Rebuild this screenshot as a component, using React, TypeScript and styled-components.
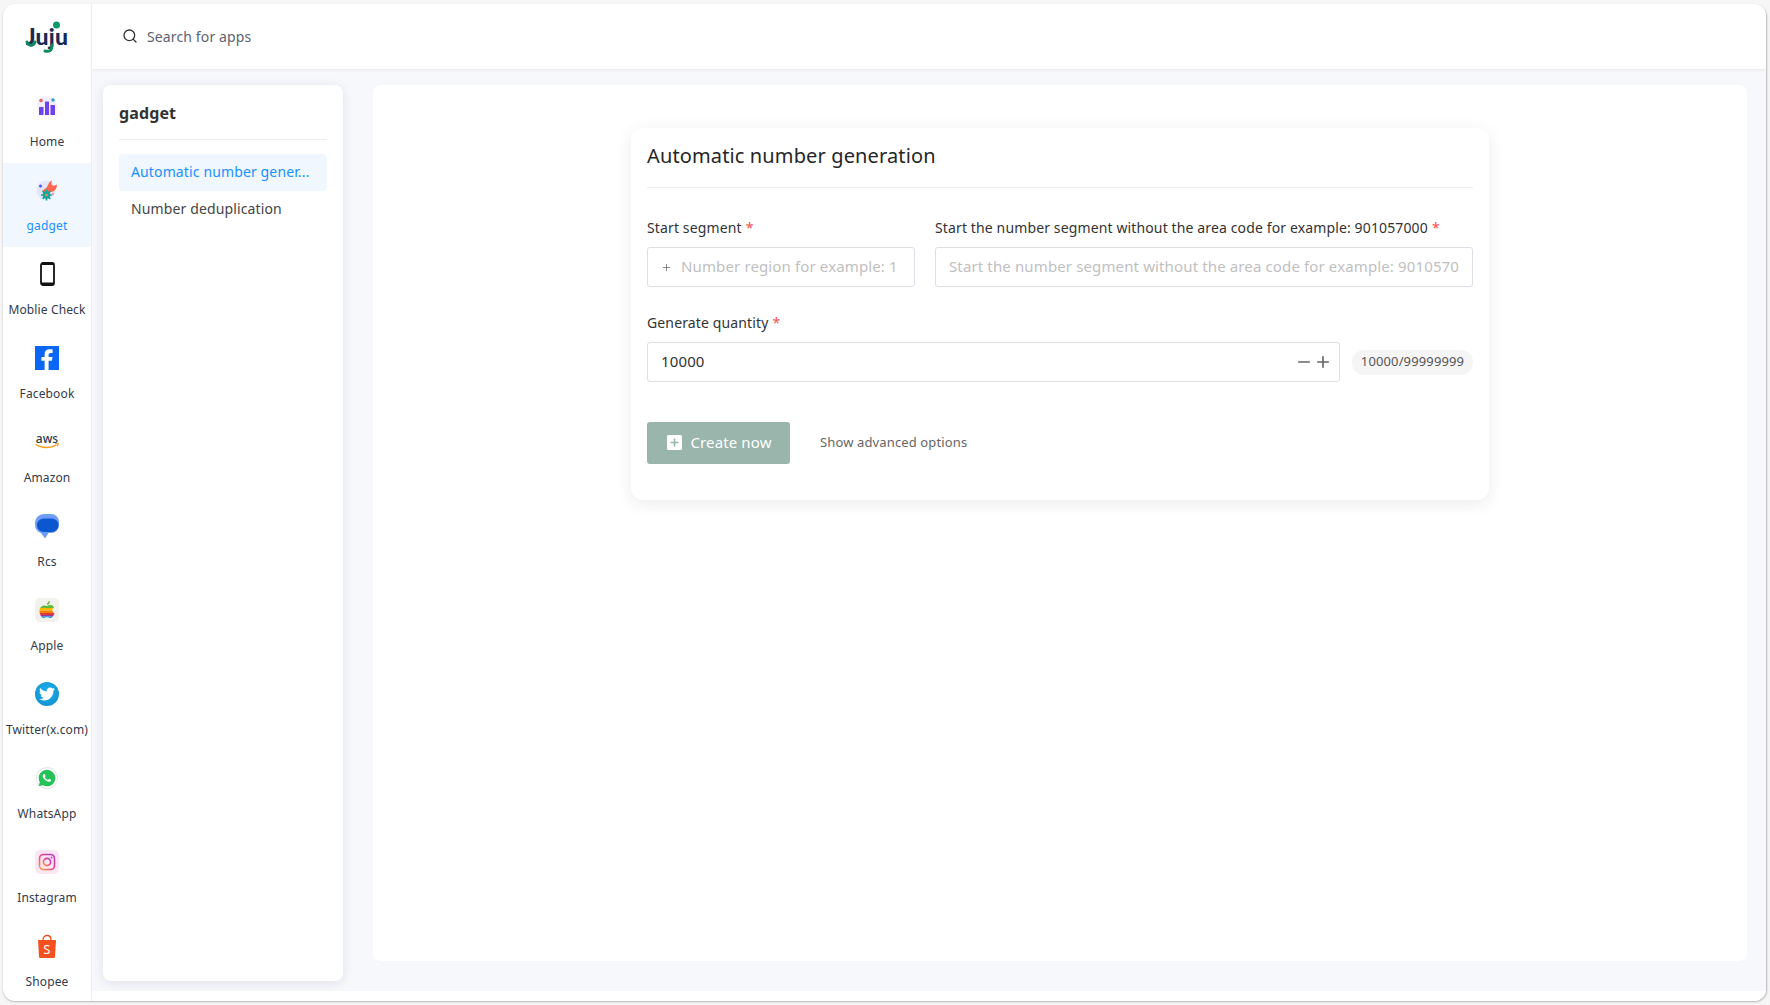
import React from 'react';
import styled, { createGlobalStyle } from 'styled-components';
import { Search, Minus, Plus } from 'lucide-react';
import { FaTwitter } from 'react-icons/fa';
import { RiWhatsappFill } from 'react-icons/ri';

const FONT = `"Noto Sans", "Open Sans", Arial, sans-serif`;
const TRACKING = '0.13px';

const Global = createGlobalStyle`
  html, body { margin: 0; padding: 0; height: 100%; }
  body { background: #f6f6f6; font-family: ${FONT}; letter-spacing: ${TRACKING}; overflow: hidden; }
  * { box-sizing: border-box; }
`;

const Page = styled.div`
  width: 1770px;
  height: 1005px;
  padding: 4px 4px 4px 3px;
`;
const Window = styled.div`
  display: flex;
  height: 997px;
  background: #fff;
  border-radius: 12px;
  overflow: hidden;
  box-shadow: 0.5px 1px 2px rgba(0, 0, 0, 0.25);
`;
const Sidebar = styled.nav`
  flex: 0 0 89px;
  border-right: 1px solid #eceef2;
  overflow: hidden;
  position: relative;
  z-index: 2;
`;
const LogoBox = styled.div`
  height: 75px;
  padding-top: 17px;
  display: flex;
  justify-content: center;
`;
const NavItem = styled.div<{ $active?: boolean }>`
  height: 84px;
  padding-top: 15px;
  display: flex;
  flex-direction: column;
  align-items: center;
  background: ${p => (p.$active ? '#f0f7ff' : 'transparent')};
  color: ${p => (p.$active ? '#1890ff' : '#333b4a')};
  font-size: 12px;
  white-space: nowrap;
`;
const NavIcon = styled.div`
  width: 24px;
  height: 24px;
  margin-bottom: 16px;
  display: flex;
  align-items: center;
  justify-content: center;
`;
const NavLabel = styled.span`
  line-height: 16px;
`;
const Right = styled.div`
  flex: 1;
  display: flex;
  flex-direction: column;
  min-width: 0;
`;
const Header = styled.header`
  flex: 0 0 65px;
  display: flex;
  align-items: center;
  gap: 9px;
  padding-left: 30px;
  background: #fff;
  box-shadow: 0 1px 3px rgba(0, 0, 0, 0.07);
  color: #5c6370;
  font-size: 14px;
  position: relative;
`;
const SearchGlyph = styled(Search)`
  color: #333;
  transform: translateY(-1px);
`;
const Main = styled.main`
  flex: 1;
  display: flex;
  gap: 30px;
  padding: 16px 19px 10px 11px;
  background: #f7f8fc;
`;
const Footer = styled.div`
  flex: 0 0 10px;
  background: #fff;
`;
const SidePanel = styled.aside`
  flex: 0 0 240px;
  background: #fff;
  border-radius: 8px;
  padding: 0 16px;
  box-shadow: 0 2px 12px rgba(30, 30, 60, 0.1);
`;
const PanelTitle = styled.h2`
  margin: 0 0 14px;
  height: 55px;
  line-height: 56px;
  font-size: 16px;
  font-weight: 700;
  color: #333;
  border-bottom: 1px solid #eee;
`;
const PanelItem = styled.div<{ $active?: boolean }>`
  height: 37px;
  line-height: 36px;
  padding: 0 12px;
  border-radius: 4px;
  font-size: 14px;
  color: ${p => (p.$active ? '#1890ff' : '#444')};
  background: ${p => (p.$active ? '#f0f7ff' : 'transparent')};
  white-space: nowrap;
`;
const Stage = styled.section`
  flex: 1;
  margin-bottom: 20px;
  background: #fff;
  border-radius: 8px;
  padding-top: 43px;
  display: flex;
  justify-content: center;
  align-items: flex-start;
`;
const Card = styled.div`
  width: 858px;
  height: 372px;
  padding: 0 16px;
  background: #fff;
  border-radius: 12px;
  box-shadow: 0 4px 18px rgba(0, 0, 0, 0.08);
`;
const CardTitle = styled.h1`
  margin: 0 0 24px;
  height: 60px;
  line-height: 56px;
  font-size: 20px;
  font-weight: 400;
  color: #262626;
  border-bottom: 1px solid #eee;
`;
const SegmentRow = styled.div`
  display: grid;
  grid-template-columns: 268px 1fr;
  column-gap: 20px;
  margin-bottom: 20px;
`;
const Field = styled.div`
  min-width: 0;
`;
const Label = styled.div`
  height: 35px;
  line-height: 32px;
  font-size: 14px;
  color: #333;
  white-space: nowrap;
`;
const Star = styled.span`
  color: #ff4d4f;
  margin-left: 4px;
`;
const InputBox = styled.div`
  height: 40px;
  display: flex;
  align-items: center;
  padding: 0 13px;
  border: 1px solid #dcdfe6;
  border-radius: 3px;
  background: #fff;
`;
const Prefix = styled.span`
  color: #666;
  margin-right: 9px;
  display: flex;
`;
const TextInput = styled.input`
  flex: 1;
  min-width: 0;
  border: 0;
  outline: 0;
  padding: 0 0 3px;
  font: 400 15px ${FONT};
  letter-spacing: ${TRACKING};
  color: #333;
  background: transparent;
  &::placeholder {
    color: #bfbfbf;
    opacity: 1;
  }
`;
const QuantityRow = styled.div`
  display: flex;
  align-items: center;
  gap: 12px;
`;
const QuantityBox = styled(InputBox)`
  flex: 1;
  padding-right: 7px;
`;
const Stepper = styled.div`
  display: flex;
  gap: 1px;
  color: #666;
`;
const Counter = styled.span`
  flex: 0 0 121px;
  height: 25px;
  line-height: 23px;
  text-align: center;
  border-radius: 12px;
  background: #f5f5f5;
  font-size: 13px;
  color: #555;
`;
const Actions = styled.div`
  display: flex;
  align-items: center;
  gap: 30px;
  margin-top: 40px;
`;
const CreateButton = styled.button`
  width: 143px;
  height: 42px;
  padding: 0 0 2px 2px;
  display: flex;
  align-items: center;
  justify-content: center;
  gap: 8px;
  border: 0;
  border-radius: 3px;
  background: #99b5ac;
  color: #fff;
  font: 400 15px ${FONT};
  letter-spacing: ${TRACKING};
`;
const AdvancedLink = styled.span`
  padding-bottom: 2px;
  font-size: 13px;
  color: #666;
`;
const TwitterDisc = styled.div`
  width: 24px;
  height: 24px;
  border-radius: 50%;
  background: radial-gradient(circle at 50% 40%, #1fb2ee, #0e8ac9);
  display: flex;
  align-items: center;
  justify-content: center;
`;
const WhatsappDisc = styled.div`
  width: 20px;
  height: 20px;
  border-radius: 50%;
  background: #fff;
  box-shadow: 0 0 0 1px #e6e8e6;
  display: flex;
  align-items: center;
  justify-content: center;
`;

const Logo = () => (
  <svg width="44" height="33" viewBox="0 0 44 33" role="img" aria-label="Juju logo">
    <text x="22" y="24" textAnchor="middle" fontFamily="Lato, sans-serif" fontWeight="900" fontSize="23" letterSpacing="0.2" fill="#1b2a55">Juju</text>
    <path d="M2 21c1 4 6 5 8 0" fill="none" stroke="#0d8a5f" strokeWidth="3" strokeLinecap="round" />
    <path d="M20 30c4 1 7 0 7-6" fill="none" stroke="#0d8a5f" strokeWidth="3" strokeLinecap="round" />
    <circle cx="31.500" cy="4" r="3.500" fill="#0d9a66" />
  </svg>
);
const HomeIcon = () => (
  <svg width="20" height="20" viewBox="0 0 20 20">
    <circle cx="10" cy="10" r="10" fill="#f3eeff" />
    <rect x="2" y="11" width="4.500" height="8" rx="0.500" fill="#6f42ee" />
    <rect x="8" y="5.500" width="4" height="13.500" rx="0.500" fill="#6f42ee" />
    <rect x="13.500" y="9" width="4.500" height="10" rx="0.500" fill="#6f42ee" />
    <circle cx="4" cy="4.500" r="1.800" fill="#f0605e" />
    <circle cx="16" cy="4" r="1.800" fill="#2ea8c4" />
  </svg>
);
const GadgetIcon = () => (
  <svg width="22" height="22" viewBox="0 0 22 22">
    <circle cx="10" cy="11" r="9.500" fill="#e3e6fa" />
    <path d="M6 12C8 10 11 9 12 6 13 3 15 1.500 16 1.500L15 5l2.500 2L21 5.500C21 9 19 13 15 13L9 15z" fill="#fb6a50" />
    <circle cx="10.500" cy="16" r="3.800" fill="#13a89a" />
    <path d="M10.500 10.500v11M5 16h11M6.700 12.200l7.600 7.600M14.300 12.200l-7.600 7.600" stroke="#13a89a" strokeWidth="1.700" />
    <circle cx="10.500" cy="16" r="1.300" fill="#f9847a" />
    <circle cx="4.500" cy="7" r="1.500" fill="#4b53e8" />
    <circle cx="17" cy="15" r="1" fill="#f9847a" />
  </svg>
);
const PhoneIcon = () => (
  <svg width="15" height="24" viewBox="0 0 15 24">
    <rect x="1" y="1" width="13" height="22" rx="2" fill="#fff" stroke="#111" strokeWidth="1.800" />
    <rect x="1" y="1" width="13" height="2" fill="#111" />
    <rect x="1" y="20.500" width="13" height="2.500" fill="#111" />
  </svg>
);
const FacebookIcon = () => (
  <svg width="24" height="24" viewBox="0 0 24 24">
    <rect width="24" height="24" fill="#0a66f5" />
    <path d="M13.600 24v-9.200h3.300l.6-3.800h-3.900V8.900c0-1.300.5-2 2-2h2V3.600c-.9-.2-2-.3-3-.3-3.100 0-5 1.800-5 5V11H6.400v3.800h3.200V24z" fill="#fff" />
  </svg>
);
const AwsIcon = () => (
  <svg width="24" height="24" viewBox="0 0 24 24">
    <text x="12" y="12.500" textAnchor="middle" fontFamily="'Noto Sans', sans-serif" fontWeight="500" fontSize="12" letterSpacing="0" fill="#2f3a4a">aws</text>
    <path d="M0.500 14.500c6 4 15 4 21 0.500" fill="none" stroke="#f59d1b" strokeWidth="1.400" />
    <path d="M20 14l3.200-.5-.7 3" fill="none" stroke="#f59d1b" strokeWidth="1.100" />
  </svg>
);
const RcsIcon = () => (
  <svg width="24" height="25" viewBox="0 0 24 25">
    <path d="M9 0h7a8 8 0 0 1 8 8v3a8 8 0 0 1-8 8h-2.500L10 24.500 6 19A8.500 9.500 0 0 1 0 9.500 9 9 0 0 1 9 0z" fill="#6f9cf5" />
    <rect x="2" y="4.500" width="21.500" height="13.500" rx="6.700" fill="#0b57d0" />
  </svg>
);
const AppleIcon = () => (
  <svg width="24" height="24" viewBox="0 0 24 24">
    <rect width="24" height="24" rx="5" fill="#f3f1ec" />
    <clipPath id="appleShape">
      <path d="M12 8c2-1.500 6-1.500 7 1.500-2.500 1.500-2 5 .5 6-1 2.500-2.500 4.500-4 4.500-1.300 0-2-.7-3.500-.7s-2.200.7-3.500.7C6 20 4.500 15.500 4.500 13 4.500 8 9 6.500 12 8z" />
    </clipPath>
    <g clipPath="url(#appleShape)">
      <rect x="0" y="5" width="24" height="5" fill="#5ebd3e" />
      <rect x="0" y="10" width="24" height="2.500" fill="#ffb900" />
      <rect x="0" y="12.500" width="24" height="2.500" fill="#f78200" />
      <rect x="0" y="15" width="24" height="2" fill="#e23838" />
      <rect x="0" y="17" width="24" height="1.500" fill="#973999" />
      <rect x="0" y="18.500" width="24" height="3" fill="#009cdf" />
    </g>
    <path d="M12 7c0-2 1-3.500 3-4 0 2-1 3.500-3 4z" fill="#5ebd3e" />
  </svg>
);
const TwitterIcon = () => (
  <TwitterDisc>
    <FaTwitter size={16} color="#fff" />
  </TwitterDisc>
);
const InstagramIcon = () => (
  <svg width="24" height="24" viewBox="0 0 24 24">
    <defs>
      <linearGradient id="igGrad" x1="0" y1="1" x2="1" y2="0">
        <stop offset="0" stopColor="#f9a53c" />
        <stop offset="0.500" stopColor="#ee3f87" />
        <stop offset="1" stopColor="#a63cc8" />
      </linearGradient>
    </defs>
    <rect width="24" height="24" rx="5" fill="#fde6f3" />
    <rect x="4.500" y="4.500" width="15" height="15" rx="4" fill="none" stroke="url(#igGrad)" strokeWidth="1.600" />
    <circle cx="12" cy="12" r="3.600" fill="none" stroke="url(#igGrad)" strokeWidth="1.600" />
    <circle cx="16.500" cy="7.500" r="1" fill="#d63ca0" />
  </svg>
);
const ShopeeIcon = () => (
  <svg width="20" height="24" viewBox="0 0 20 24">
    <path d="M6 6c0-6 8-6 8 0" fill="none" stroke="#f4511e" strokeWidth="1.400" />
    <path d="M1 6h18l-1 16.500a1.500 1.500 0 0 1-1.500 1.500h-13A1.500 1.500 0 0 1 2 22.500z" fill="#f4511e" />
    <text x="10" y="20" textAnchor="middle" fontFamily="'Noto Sans', sans-serif" fontSize="13" fill="#fff">S</text>
  </svg>
);
const PlusSquare = () => (
  <svg width="15" height="15" viewBox="0 0 15 15">
    <rect width="15" height="15" rx="1.500" fill="#fff" />
    <path d="M7.500 3.500v8M3.500 7.500h8" stroke="#99b5ac" strokeWidth="1.600" />
  </svg>
);

const navItems: { label: string; icon: React.ReactNode; active?: boolean }[] = [
  { label: 'Home', icon: <HomeIcon /> },
  { label: 'gadget', icon: <GadgetIcon />, active: true },
  { label: 'Moblie Check', icon: <PhoneIcon /> },
  { label: 'Facebook', icon: <FacebookIcon /> },
  { label: 'Amazon', icon: <AwsIcon /> },
  { label: 'Rcs', icon: <RcsIcon /> },
  { label: 'Apple', icon: <AppleIcon /> },
  { label: 'Twitter(x.com)', icon: <TwitterIcon /> },
  { label: 'WhatsApp', icon: <WhatsappDisc><RiWhatsappFill size={20} color="#25c25a" /></WhatsappDisc> },
  { label: 'Instagram', icon: <InstagramIcon /> },
  { label: 'Shopee', icon: <ShopeeIcon /> },
];

export default function App() {
  return (
    <Page>
      <Global />
      <Window>
        <Sidebar>
          <LogoBox><Logo /></LogoBox>
          {navItems.map(item => (
            <NavItem key={item.label} $active={item.active}>
              <NavIcon>{item.icon}</NavIcon>
              <NavLabel>{item.label}</NavLabel>
            </NavItem>
          ))}
        </Sidebar>
        <Right>
          <Header>
            <SearchGlyph size={16} strokeWidth={2} />
            Search for apps
          </Header>
          <Main>
            <SidePanel>
              <PanelTitle>gadget</PanelTitle>
              <PanelItem $active>Automatic number gener...</PanelItem>
              <PanelItem>Number deduplication</PanelItem>
            </SidePanel>
            <Stage>
              <Card>
                <CardTitle>Automatic number generation</CardTitle>
                <SegmentRow>
                  <Field>
                    <Label>Start segment<Star>*</Star></Label>
                    <InputBox>
                      <Prefix><Plus size={11} strokeWidth={1.6} /></Prefix>
                      <TextInput placeholder="Number region for example: 1" />
                    </InputBox>
                  </Field>
                  <Field>
                    <Label>Start the number segment without the area code for example: 901057000<Star>*</Star></Label>
                    <InputBox>
                      <TextInput placeholder="Start the number segment without the area code for example: 9010570" />
                    </InputBox>
                  </Field>
                </SegmentRow>
                <Field>
                  <Label>Generate quantity<Star>*</Star></Label>
                  <QuantityRow>
                    <QuantityBox>
                      <TextInput defaultValue="10000" />
                      <Stepper>
                        <Minus size={18} strokeWidth={2.2} />
                        <Plus size={18} strokeWidth={2.2} />
                      </Stepper>
                    </QuantityBox>
                    <Counter>10000/99999999</Counter>
                  </QuantityRow>
                </Field>
                <Actions>
                  <CreateButton><PlusSquare />Create now</CreateButton>
                  <AdvancedLink>Show advanced options</AdvancedLink>
                </Actions>
              </Card>
            </Stage>
          </Main>
          <Footer />
        </Right>
      </Window>
    </Page>
  );
}
